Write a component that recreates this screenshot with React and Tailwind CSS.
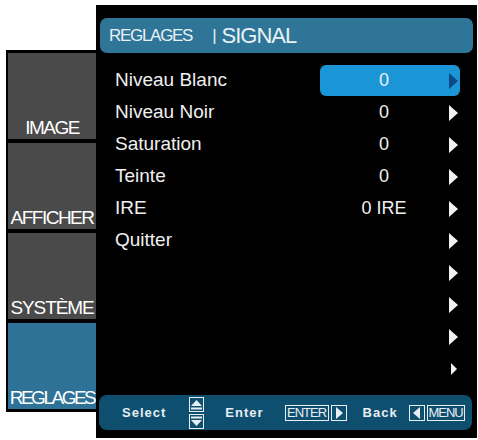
import React from "react";

const rows = [
  { label: "Niveau Blanc", value: "0" },
  { label: "Niveau Noir", value: "0" },
  { label: "Saturation", value: "0" },
  { label: "Teinte", value: "0" },
  { label: "IRE", value: "0 IRE" },
  { label: "Quitter", value: "" },
  { label: "", value: "" },
  { label: "", value: "" },
  { label: "", value: "" },
  { label: "", value: "", small: true },
];

function Arrow({ color = "#f2f2f2", small }) {
  return small ? (
    <svg width="9" height="16" viewBox="0 0 9 16" className="block">
      <polygon points="2,2 8,8 2,14" fill={color} />
    </svg>
  ) : (
    <svg width="9" height="16" viewBox="0 0 9 16" className="block">
      <polygon points="0,0 9,8 0,16" fill={color} />
    </svg>
  );
}

function Tab({ label, active, track }) {
  return (
    <div
      className={
        "h-[86px] flex items-end justify-center pb-[2px] overflow-hidden " +
        (active ? "bg-[#2e7397]" : "bg-[#4a4a4a]")
      }
    >
      <span className={"text-[19px] leading-[19px] text-white whitespace-nowrap " + track}>{label}</span>
    </div>
  );
}

export default function App() {
  return (
    <div
      className="w-[478px] h-[440px] bg-white flex items-start pl-[6px] pt-[5px]"
      style={{ fontFamily: '"Liberation Sans", Arial, sans-serif' }}
    >
      <div className="mt-[45px] w-[90px] bg-black pl-[2px] pt-[3px] pb-[3px] flex flex-col gap-[4px]">
        <Tab label="IMAGE" track="tracking-[-1.5px]" />
        <Tab label="AFFICHER" track="tracking-[-1.5px]" />
        <Tab label="SYSTÈME" track="tracking-[-1.1px]" />
        <Tab label="REGLAGES" active track="tracking-[-2.5px]" />
      </div>
      <div className="w-[381px] h-[433px] bg-black flex flex-col pt-[13px]">
        <div className="mx-[4px] h-[35px] rounded-[7px] bg-[#2e7598] flex items-center pl-[9px] text-[#e9f1f5]">
          <span className="text-[17px] tracking-[-1.3px]">REGLAGES</span>
          <span className="ml-[20px] text-[17px]">|</span>
          <span className="ml-[5px] text-[22px] tracking-[-1px]">SIGNAL</span>
        </div>
        <div className="mt-[12px] flex flex-col">
          {rows.map((r, i) => (
            <div key={i} className="h-[32px] flex items-start">
              <div className="flex-1 h-[31px] flex items-center pl-[19px] text-[19px] text-[#f0f0f0]">
                {r.label}
              </div>
              <div
                className={
                  "w-[140px] h-[31px] mr-[17px] flex items-center rounded-[6px] " +
                  (i === 0 ? "bg-[#1a96d7]" : "")
                }
              >
                <span className="w-[128px] text-center text-[18px] text-[#f0f0f0]">{r.value}</span>
                <span className="ml-[1px]">
                  <Arrow color={i === 0 ? "#0c4a85" : "#f2f2f2"} small={r.small} />
                </span>
              </div>
            </div>
          ))}
        </div>
        <div className="mt-[10px] ml-[3px] mr-[5px] h-[35px] rounded-[8px] bg-[#0e4f70] flex items-center text-[#e8eef2]">
          <span className="ml-[23px] text-[13px] font-bold tracking-[1px]">Select</span>
          <span className="ml-[23px] flex flex-col gap-[2px]">
            <span className="w-[15px] h-[15px] border border-[#e8eef2] flex items-center justify-center">
              <svg width="13" height="13" viewBox="0 0 13 13" className="block">
                <polygon points="1,8 6.5,2 12,8" fill="#e8eef2" />
                <rect x="1" y="9.5" width="11" height="2" fill="#e8eef2" />
              </svg>
            </span>
            <span className="w-[15px] h-[15px] border border-[#e8eef2] flex items-center justify-center">
              <svg width="13" height="13" viewBox="0 0 13 13" className="block">
                <rect x="1" y="1.5" width="11" height="2" fill="#e8eef2" />
                <polygon points="1,5 12,5 6.5,11" fill="#e8eef2" />
              </svg>
            </span>
          </span>
          <span className="ml-[21px] text-[13px] font-bold tracking-[1px]">Enter</span>
          <span className="ml-[21px] h-[16px] w-[44px] border border-[#e8eef2] flex items-center justify-center text-[13px] leading-none tracking-[-1px]">
            ENTER
          </span>
          <span className="ml-[2px] h-[16px] w-[16px] border border-[#e8eef2] flex items-center justify-center">
            <svg width="8" height="12" viewBox="0 0 8 12" className="block">
              <polygon points="1,0 8,6 1,12" fill="#e8eef2" />
            </svg>
          </span>
          <span className="ml-[16px] text-[13px] font-bold tracking-[1px]">Back</span>
          <span className="ml-[11px] h-[16px] w-[16px] border border-[#e8eef2] flex items-center justify-center">
            <svg width="8" height="12" viewBox="0 0 8 12" className="block">
              <polygon points="7,0 0,6 7,12" fill="#e8eef2" />
            </svg>
          </span>
          <span className="ml-[2px] h-[16px] w-[38px] border border-[#e8eef2] flex items-center justify-center text-[13px] leading-none tracking-[-1px]">
            MENU
          </span>
        </div>
      </div>
    </div>
  );
}
